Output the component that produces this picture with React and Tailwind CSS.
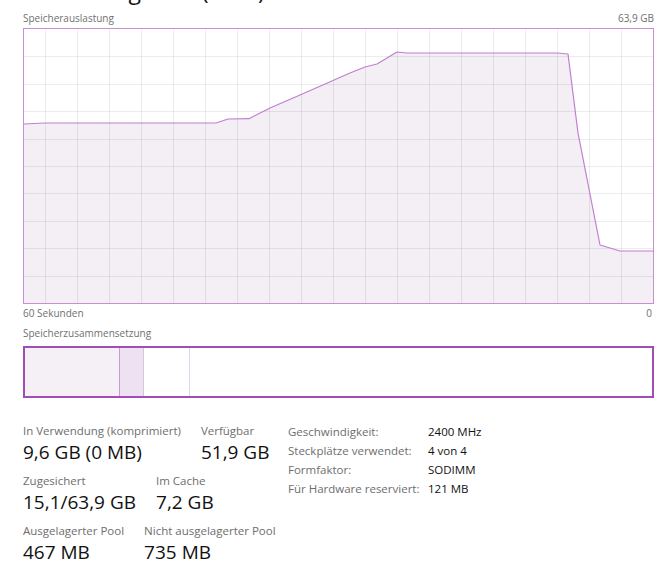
import React from "react";

const linePts = [
  [0, 95], [21, 94], [192, 94], [204, 90], [225, 89.7], [246, 79], [276, 66],
  [326, 44], [341, 38], [353, 35], [373, 23], [383, 24], [533, 24], [544, 25],
  [554, 104], [576, 216], [596, 222], [629, 222],
];

function Graph() {
  const W = 629;
  const H = 274;
  const vx = [];
  for (let x = 21; x < W; x += 32) vx.push(x);
  const hy = [];
  for (let k = 1; k < 10; k++) hy.push(Math.round(27.4 * k) + 0.5);
  const line = linePts.map((p) => p.join(",")).join(" ");
  const area = `0,${H} ${line} ${W},${H}`;
  return (
    <svg width={W} height={H} viewBox={`0 0 ${W} ${H}`} className="block">
      <polygon points={area} fill="#f3eff5" />
      {vx.map((x) => (
        <line key={"v" + x} x1={x + 0.5} y1={0} x2={x + 0.5} y2={H} stroke="rgba(0,0,0,0.075)" strokeWidth="1" />
      ))}
      {hy.map((y) => (
        <line key={"h" + y} x1={0} y1={y} x2={W} y2={y} stroke="rgba(0,0,0,0.075)" strokeWidth="1" />
      ))}
      <polyline points={line} fill="none" stroke="#c07fd0" strokeWidth="1.2" strokeLinejoin="round" />
    </svg>
  );
}

function Stat({ label, value }) {
  return (
    <div className="flex flex-col">
      <div className="text-[11.5px] leading-[16px] text-[#6e6e6e] whitespace-nowrap">{label}</div>
      <div className="text-[19px] leading-[26px] text-[#111] whitespace-nowrap">{value}</div>
    </div>
  );
}

export default function App() {
  return (
    <div
      className="w-[665px] h-[582px] overflow-hidden bg-white pl-[23px] pr-[11px]"
      style={{ fontFamily: '"Open Sans", "Noto Sans", sans-serif' }}
    >
      <div className="-mt-[26px] h-[31px] text-[23px] leading-[32px] text-[#111] whitespace-nowrap">
        Auslastung total (RAM)
      </div>

      <div className="mt-[7px] flex justify-between text-[10px] leading-[12px] text-[#707070]">
        <span>Speicherauslastung</span>
        <span>63,9 GB</span>
      </div>

      <div className="mt-[4px] h-[276px] border border-[#c98fd6] bg-white">
        <Graph />
      </div>

      <div className="mt-[3px] flex justify-between text-[10px] leading-[12px] text-[#707070]">
        <span>60 Sekunden</span>
        <span className="pr-[2px]">0</span>
      </div>

      <div className="mt-[8px] text-[10px] leading-[12px] text-[#707070]">Speicherzusammensetzung</div>

      <div className="mt-[7px] h-[52px] border-2 border-[#a24cb6] flex">
        <div className="w-[95px] bg-[#f4f0f6] border-r border-[#c99ad4]" />
        <div className="w-[24px] bg-[#eee2f2] border-r border-[#d8c4de]" />
        <div className="w-[46px] bg-white border-r border-[#e4d3e9]" />
        <div className="flex-1 bg-white" />
      </div>

      <div className="mt-[25px] flex items-start">
        <div className="w-[265px] shrink-0 flex flex-col gap-[8px]">
          <div className="flex gap-[20px]">
            <Stat label="In Verwendung (komprimiert)" value="9,6 GB (0 MB)" />
            <Stat label="Verfügbar" value="51,9 GB" />
          </div>
          <div className="flex gap-[20px]">
            <Stat label="Zugesichert" value="15,1/63,9 GB" />
            <Stat label="Im Cache" value="7,2 GB" />
          </div>
          <div className="flex gap-[20px]">
            <Stat label="Ausgelagerter Pool" value="467 MB" />
            <Stat label="Nicht ausgelagerter Pool" value="735 MB" />
          </div>
        </div>
        <div className="-mt-[1px] grid grid-cols-[140px_auto] content-start text-[11.5px] leading-[19px]">
          <span className="text-[#6e6e6e]">Geschwindigkeit:</span>
          <span className="text-[#111]">2400 MHz</span>
          <span className="text-[#6e6e6e]">Steckplätze verwendet:</span>
          <span className="text-[#111]">4 von 4</span>
          <span className="text-[#6e6e6e]">Formfaktor:</span>
          <span className="text-[#111]">SODIMM</span>
          <span className="text-[#6e6e6e]">Für Hardware reserviert:</span>
          <span className="text-[#111]">121 MB</span>
        </div>
      </div>
    </div>
  );
}
